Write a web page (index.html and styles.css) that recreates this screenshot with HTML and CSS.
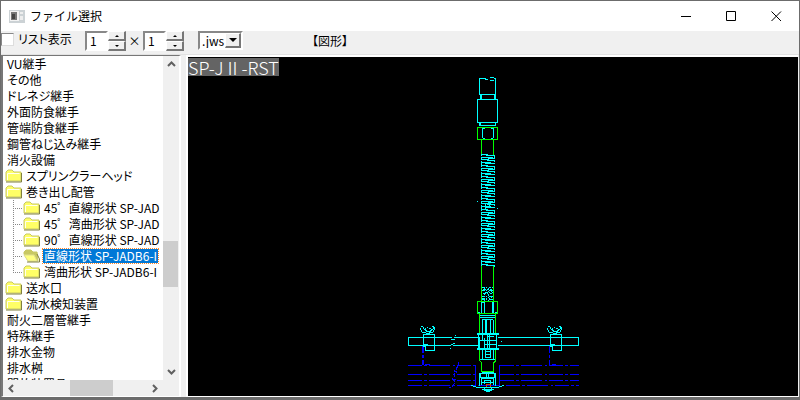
FILE: index.html
```html
<!DOCTYPE html>
<html lang="ja">
<head>
<meta charset="utf-8">
<title>ファイル選択</title>
<link rel="stylesheet" href="styles.css">
</head>
<body>
<svg class="defs" aria-hidden="true">
  <symbol id="folder" viewBox="0 0 18 14">
    <path d="M1 12V3L3 1H7L9 3H16V12Z" fill="#ffff66" stroke="#c8c864"/>
    <path d="M2.500 11V4.500H14.500" fill="none" stroke="#fffff0"/>
    <path d="M1 13H16.500V4" fill="none" stroke="#808040"/>
  </symbol>
  <symbol id="folder-open" viewBox="0 0 18 14">
    <path d="M1 5V3L3 1H8L10 3H14L15 12H5Z" fill="#c8c864" stroke="#c8c864"/>
    <path d="M1 6H11L14 12H5Z" fill="#ffff80" stroke="#e0e090"/>
    <path d="M4 13H16.500V10L14 5" fill="none" stroke="#808040"/>
  </symbol>
</svg>
<div class="window">
  <header class="titlebar">
    <svg class="app-icon" viewBox="0 0 16 14" shape-rendering="crispEdges"><path d="M0 1H16V14H0Z" fill="#ccd2d5"/><path d="M1 2H10V12H1Z" fill="#f3f3f3"/><path d="M2 3H8V11H2Z" fill="#777"/><path d="M3 5H6V10H3Z" fill="#444"/><path d="M11 3H14V5H11ZM11 7H14V11H11Z" fill="#eee"/></svg>
    <h1>ファイル選択</h1>
    <div class="window-buttons">
      <button aria-label="最小化"><svg viewBox="0 0 11 11"><path d="M0 5.500H10"/></svg></button>
      <button aria-label="最大化"><svg viewBox="0 0 11 11"><path d="M.5 .5H9.500V9.500H.5Z"/></svg></button>
      <button aria-label="閉じる"><svg viewBox="0 0 11 11"><path d="M.5 .5L10 10M10 .5L.5 10"/></svg></button>
    </div>
  </header>
  <form class="toolbar">
    <label class="check"><input type="checkbox"><span>リスト表示</span></label>
    <div class="spinner"><input type="text" value="1" aria-label="列数"><div class="steps"><button type="button" aria-label="列を増やす"><i class="up"></i></button><button type="button" aria-label="列を減らす"><i class="down"></i></button></div></div>
    <span class="times">×</span>
    <div class="spinner"><input type="text" value="1" aria-label="行数"><div class="steps"><button type="button" aria-label="行を増やす"><i class="up"></i></button><button type="button" aria-label="行を減らす"><i class="down"></i></button></div></div>
    <div class="format"><select aria-label="形式"><option>.jws</option></select><span class="arrow"><i class="drop"></i></span></div>
    <span class="kind">【図形】</span>
  </form>
  <main class="content">
    <nav class="tree">
      <ul class="items">
        <li>VU継手</li>
        <li>その他</li>
        <li>ドレネジ継手</li>
        <li>外面防食継手</li>
        <li>管端防食継手</li>
        <li>鋼管ねじ込み継手</li>
        <li>消火設備</li>
        <li class="folder"><svg><use href="#folder"/></svg><span>スプリンクラーヘッド</span></li>
        <li class="folder"><svg><use href="#folder"/></svg><span>巻き出し配管</span></li>
        <li class="folder child"><svg><use href="#folder"/></svg><span>45ﾟ&nbsp; 直線形状 SP-JAD</span></li>
        <li class="folder child"><svg><use href="#folder"/></svg><span>45ﾟ&nbsp; 湾曲形状 SP-JAD</span></li>
        <li class="folder child"><svg><use href="#folder"/></svg><span>90ﾟ&nbsp; 直線形状 SP-JAD</span></li>
        <li class="folder child selected"><svg><use href="#folder-open"/></svg><span>直線形状 SP-JADB6-I</span></li>
        <li class="folder child last"><svg><use href="#folder"/></svg><span>湾曲形状 SP-JADB6-I</span></li>
        <li class="folder"><svg><use href="#folder"/></svg><span>送水口</span></li>
        <li class="folder"><svg><use href="#folder"/></svg><span>流水検知装置</span></li>
        <li>耐火二層管継手</li>
        <li>特殊継手</li>
        <li>排水金物</li>
        <li>排水桝</li>
        <li>開放装置品</li>
      </ul>
      <div class="scroll vertical">
        <svg viewBox="0 0 9 9"><path d="M1 6L4.500 2.500L8 6"/></svg>
        <div class="track"><div class="thumb"></div></div>
        <svg viewBox="0 0 9 9"><path d="M1 3L4.500 6.500L8 3"/></svg>
      </div>
      <div class="scroll horizontal">
        <svg viewBox="0 0 9 9"><path d="M6 1L2.500 4.500L6 8"/></svg>
        <div class="track"><div class="thumb"></div></div>
        <svg viewBox="0 0 9 9"><path d="M3 1L6.500 4.500L3 8"/></svg>
      </div>
    </nav>
    <section class="preview">
      <svg class="drawing" viewBox="188 57 610 339" fill="none" stroke="#0ff" shape-rendering="crispEdges" role="img" aria-label="SP-JⅡ-RST">
        <defs>
          <pattern id="coil" width="14" height="11" patternUnits="userSpaceOnUse" x="481" y="154">
            <path d="M0 .5H7M5 1.500H14M0 3.500H12M7 4.500H14M0 5.500H8M6 6.500H14M0 8.500H10M4 9.500H14M.5 0V2M.5 3V6M.5 7V11M13.500 1V4M13.500 6V8"/>
          </pattern>
          <g id="wing">
            <path d="M423.500 334.500H434.500V350.500H425.500V346.500H423.500ZM424 344.500H428M426 345.500H429M420.500 330V327.500M421 326.500H423M423.500 327V329M424 329.500H426M425 330.500H427M426 331.500H431M430 330.500H432M431 329.500H433M433.500 327V329M432 326.500H434M434.500 327V330M433.500 330V332M421.500 330V332M422 332.500H426M429 332.500H433M426 333.500H430M427 327.500H428M425 328.500H426M429 328.500H431"/>
          </g>
        </defs>
        <g class="ceiling" stroke="#00f">
          <path stroke-dasharray="14 2 3 2 21 3 2 2" d="M408 365.500H475M500 365.500H579M408 374.500H475M500 374.500H579M408 380.500H475M500 380.500H579M408 385.500H579"/>
          <path d="M475.500 365V386M499.500 365V386"/>
          <path stroke-dasharray="7 2 3 2" d="M422.500 346V365M423.500 346V365M549.500 346V365"/>
          <path d="M425 364.500H430M552 364.500H556"/>
          <path stroke-dasharray="4 1" d="M458.500 362V366L456.500 368V372L454.500 371V376L452.500 379H456L454 381V384L451.500 387H449"/>
        </g>
        <g class="pipes">
          <path d="M478 337.500H408.500V345.500H478M498 337.500H578.500V345.500H498"/>
          <use href="#wing"/><use href="#wing" x="127"/>
          <path stroke="#000" d="M452 337.500H454M451 345.500H453"/>
          <path d="M455 335.500H456M451 339.500H455M453 343.500H455M451 344.500H453M450 348.500H451M501 341.500H502"/>
        </g>
        <g class="upper">
          <path d="M479.500 94.500V78.500H486M485 79.500H488M490 80.500H494M490 77.500H494M494 78.500H496M495.500 79V94.500H479.500M480.500 95V99M481.500 95V99M494.500 95V99M495.500 95V99M477.500 99.500H497.500V122.500H477.500ZM479.500 123V126M480.500 123V126M495.500 123V126M480 125.500H495"/>
          <path d="M482.500 128V138M493.500 128V138M483 128.500H485M491 128.500H493M483 138.500H485M491 138.500H493"/>
          <path stroke="#0f0" d="M477.500 127.500H497.500V139.500H477.500ZM481.500 140V155M493.500 140V155M481.500 266V301M493.500 266V301"/>
          <path stroke="none" fill="url(#coil)" d="M481 154H495V267H481Z"/>
          <path d="M477 201.500H478M497 208.500H498M485 203.500H491M485.500 204V209M489.500 201V207"/>
        </g>
        <g class="lower">
          <path stroke-dasharray="3 1 1 2 2 1" d="M482 287.500H493M482 290.500H493M483 293.500H493M482 296.500H493M482 299.500H493M483 289.500H493M485 292.500H493M482 298.500H490"/>
          <path stroke-dasharray="2 1 1 2" d="M484.500 287V301M488.500 288V301M491.500 290V301"/>
          <path d="M481.500 301V313M484.500 301V313M493.500 301V313M492.500 301V313M482 302.500H485M478 312.500H480M495 312.500H497"/>
          <path stroke="#0f0" d="M477.500 301.500H497.500V313.500H477.500ZM479.500 314V333M495.500 314V333M479.500 350V360L481.500 363V371.500H493.500V363L495.500 361V350"/>
          <path d="M480 315.500H495M480 317.500H495M482 319.500H493M482.500 320V333M485.500 320V333M486.500 320V333M490.500 320V333M493.500 320V333M477 333.500H499M477 334.500H499M478.500 335V348M479.500 337V348M482.500 335V341M484.500 338V348M487.500 335V348M489.500 335V348M496.500 335V348M480 340.500H497M484 344.500H496M487 336.500H494M477 348.500H499M477 349.500H499M482.500 350V360M485.500 350V358M490.500 350V358M493.500 350V360M485 351.500H491M485 354.500H491M485 357.500H491M480 359.500H495"/>
        </g>
        <g class="head">
          <path d="M482 372.500H494M479 373.500H496M479.500 374V386M480.500 374V378M494.500 374V378M495.500 374V386M486.500 374V377M488.500 374V377M480 377.500H495M481 378.500H494M481.500 379V385M493.500 379V385M484 380.500H491M482 382.500H493M484.500 380V384M490.500 380V384M471 385.500H473M473 386.500H476M476 387.500H499M499 386.500H502M502 385.500H504M482 389.500H494M484 390.500H492M486 391.500H490M484.500 387V390M491.500 387V390"/>
          <path stroke="#d84800" d="M486.500 387V384.500H490.500V387"/>
        </g>
      </svg>
      <div class="caption">SP-JⅡ-RST</div>
    </section>
  </main>
</div>
</body>
</html>
```
FILE: styles.css
```css
* { box-sizing: border-box; }
body {
  margin: 0;
  font: 12px/16px "Noto Sans CJK JP", sans-serif;
  font-feature-settings: "palt";
  color: #000;
}
.defs { position: absolute; width: 0; height: 0; }
.window {
  display: flex;
  flex-direction: column;
  height: 100vh;
  border: solid #6c6c6c;
  border-width: 1px 1px 3px 1px;
  background: #f0f0f0;
}
button { padding: 0; border: 0; background: none; }

.titlebar { display: flex; align-items: center; height: 30px; padding-left: 8px; background: #fff; }
.app-icon { width: 16px; height: 14px; }
h1 { margin: 0 0 0 5px; font-size: 12px; font-weight: 400; font-feature-settings: normal; }
.window-buttons { display: flex; margin-left: auto; }
.window-buttons button { display: flex; justify-content: center; align-items: center; width: 45px; height: 30px; }
.window-buttons svg { width: 11px; height: 11px; fill: none; stroke: #000; }

.toolbar { display: flex; flex: none; height: 24px; border-bottom: 1px solid #e2e2e2; }
.check { display: flex; gap: 4px; align-items: flex-start; width: 84px; }
.check input {
  appearance: none;
  width: 13px;
  height: 13px;
  margin: 2px 0 0;
  border: 1px solid;
  border-color: #888 #ddd #ddd #888;
  background: #fff;
}
.spinner { display: flex; width: 41px; height: 20px; }
.spinner input {
  width: 23px;
  padding: 0 0 0 3px;
  border: 2px solid;
  border-color: #888 #fff #fff #888;
  background: #fff;
  font: inherit;
}
.steps { display: flex; flex: 1; flex-direction: column; }
.steps button {
  display: flex;
  flex: 1;
  justify-content: center;
  align-items: center;
  border: solid;
  border-width: 1px 2px 2px 1px;
  border-color: #fff #777 #777 #fff;
}
.up, .down, .drop { width: 0; height: 0; border: solid transparent; }
.up { border-width: 0 2px 2px; border-bottom-color: #000; }
.down { border-width: 2px 2px 0; border-top-color: #000; }
.drop { border-width: 4px 4px 0; border-top-color: #000; }
.times { width: 17px; padding-top: 2px; text-align: center; font-size: 12px; }
.format {
  display: flex;
  width: 45px;
  height: 19px;
  margin-left: 14px;
  border: 2px solid;
  border-color: #888 #fff #fff #888;
  background: #fff;
}
.format select { appearance: none; flex: 1; min-width: 0; padding: 0 0 0 2px; border: 0; background: #fff; font: inherit; line-height: 14px; }
.arrow {
  display: flex;
  justify-content: center;
  align-items: center;
  width: 16px;
  border: solid;
  border-width: 1px 2px 2px 1px;
  border-color: #fff #777 #777 #fff;
  background: #f0f0f0;
}
.kind { margin-left: 69px; padding-top: 2px; }

.content { display: flex; flex: 1; min-height: 0; padding-right: 1px; gap: 5px; }
.tree {
  display: grid;
  grid-template: 1fr 16px / 1fr 16px;
  flex: none;
  width: 180px;
  border: solid;
  border-width: 1px 2px;
  border-color: #777 #fff #fff #777;
}
.items { margin: 0; padding: 0; list-style: none; min-height: 0; overflow: hidden; background: #fff; }
.items li { height: 16px; padding-left: 4px; white-space: nowrap; }
.items .folder { display: flex; align-items: center; gap: 2px; padding-left: 2px; }
.folder svg { flex: none; width: 18px; height: 14px; }
.folder span { padding: 0 1px; line-height: 14px; }
.items .child {
  margin-left: 10px;
  padding-left: 10px;
  background:
    repeating-linear-gradient(#888 0 1px, transparent 1px 2px) 0 0 / 1px 100% no-repeat,
    repeating-linear-gradient(90deg, #888 0 1px, transparent 1px 2px) 0 8px / 10px 1px no-repeat;
}
.items .last {
  background:
    repeating-linear-gradient(#888 0 1px, transparent 1px 2px) 0 0 / 1px 8px no-repeat,
    repeating-linear-gradient(90deg, #888 0 1px, transparent 1px 2px) 0 8px / 10px 1px no-repeat;
}
.selected span { outline: 1px dotted #ff8728; background: #0078d7; color: #fff; }
.scroll { display: flex; align-items: center; background: #f0f0f0; }
.scroll svg { flex: none; width: 9px; height: 9px; margin: 4px; fill: none; stroke: #606060; stroke-width: 2; }
.vertical { flex-direction: column; }
.track { display: flex; flex: 1; align-self: stretch; }
.vertical .track { flex-direction: column; padding-top: 168px; }
.horizontal .track { padding-left: 50px; }
.thumb { background: #cdcdcd; }
.vertical .thumb { height: 46px; margin-right: 1px; }
.horizontal .thumb { width: 43px; }

.preview {
  position: relative;
  flex: 1;
  min-width: 0;
  border: solid;
  border-width: 2px 0 1px 2px;
  border-color: #fff;
  background: #000;
}
.drawing { display: block; width: 100%; height: 100%; }
.caption {
  position: absolute;
  top: 1px;
  left: 0;
  background: #646464;
  color: #fff;
  font-size: 18px;
  font-weight: 300;
  line-height: 18px;
  font-feature-settings: normal;
}
```
